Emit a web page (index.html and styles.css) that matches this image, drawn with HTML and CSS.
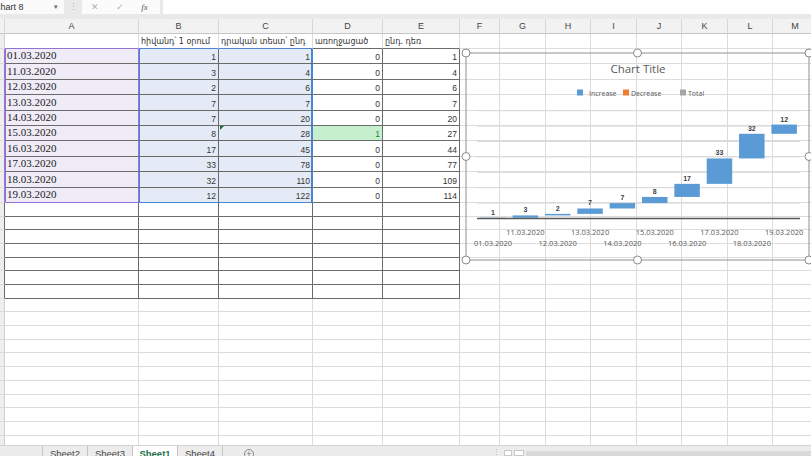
FILE: index.html
```html
<!DOCTYPE html>
<html lang="hy">
<head>
    <meta charset="UTF-8">
    <meta name="viewport" content="width=device-width, initial-scale=1.0">
    <title>COVID-19 - Sheet1</title>
    <link rel="stylesheet" href="styles.css">
</head>
<body>
    <div class="formula-bar">
        <div class="name-box">
            <span class="name-text">Chart 8</span>
            <span class="name-arrow">▾</span>
        </div>
        <div class="bar-grip">⋮</div>
        <div class="bar-icons">
            <span class="icon">✕</span>
            <span class="icon">✓</span>
            <span class="icon icon-fx">fx</span>
        </div>
        <div class="formula-input"></div>
    </div>

    <div class="sheet">
        <table class="grid">
            <colgroup>
                <col style="width:5px">
                <col style="width:134px">
                <col style="width:80px">
                <col style="width:94px">
                <col style="width:70px">
                <col style="width:77px">
                <col style="width:40px">
                <col style="width:46px">
                <col style="width:45px">
                <col style="width:46px">
                <col style="width:45px">
                <col style="width:46px">
                <col style="width:45px">
                <col style="width:45px">
            </colgroup>
            <thead>
                <tr>
                    <th class="corner"></th>
                    <th>A</th><th>B</th><th>C</th><th>D</th><th>E</th><th>F</th><th>G</th>
                    <th>H</th><th>I</th><th>J</th><th>K</th><th>L</th><th>M</th>
                </tr>
            </thead>
            <tbody id="gridBody"></tbody>
        </table>

        <div class="chart">
            <svg width="352" height="215" viewBox="462 49 352 215">
                <rect class="chart-frame" x="466" y="53" width="343" height="207"></rect>
                <text class="chart-title" x="638" y="73">Chart Title</text>

                <rect x="577" y="89.5" width="6" height="6" fill="#5b9bd5"></rect>
                <text class="legend" x="589" y="95.5">Increase</text>
                <rect x="623" y="89.5" width="6" height="6" fill="#ed7d31"></rect>
                <text class="legend" x="631" y="95.5">Decrease</text>
                <rect x="680" y="89.5" width="6" height="6" fill="#a5a5a5"></rect>
                <text class="legend" x="688" y="95.5">Total</text>

                <g id="plot"></g>

                <circle class="handle" cx="466" cy="53" r="4"></circle>
                <circle class="handle" cx="637.5" cy="53" r="4"></circle>
                <circle class="handle" cx="809" cy="53" r="4"></circle>
                <circle class="handle" cx="466" cy="156.5" r="4"></circle>
                <circle class="handle" cx="809" cy="156.5" r="4"></circle>
                <circle class="handle" cx="466" cy="260" r="4"></circle>
                <circle class="handle" cx="637.5" cy="260" r="4"></circle>
                <circle class="handle" cx="809" cy="260" r="4"></circle>
            </svg>
        </div>
    </div>

    <div class="tab-bar">
        <div class="tab-nav"></div>
        <div class="tab">Sheet2</div>
        <div class="tab">Sheet3</div>
        <div class="tab active">Sheet1</div>
        <div class="tab">Sheet4</div>
        <div class="tab-add">+</div>
        <div class="hscroll">
            <span class="hscroll-grip">⋮</span>
            <span class="hscroll-btn"></span>
            <span class="hscroll-btn wide"></span>
            <span class="hscroll-track"></span>
        </div>
    </div>

    <script>
        const data = [
            ['01.03.2020', 1, 1, 0, 1],
            ['11.03.2020', 3, 4, 0, 4],
            ['12.03.2020', 2, 6, 0, 6],
            ['13.03.2020', 7, 7, 0, 7],
            ['14.03.2020', 7, 20, 0, 20],
            ['15.03.2020', 8, 28, 1, 27],
            ['16.03.2020', 17, 45, 0, 44],
            ['17.03.2020', 33, 78, 0, 77],
            ['18.03.2020', 32, 110, 0, 109],
            ['19.03.2020', 12, 122, 0, 114]
        ];
        const labels = ['հիվանդ՝ 1 օրում', 'դրական տեստ՝ ընդ', 'առողջացած', 'ընդ. դեռ'];
        const EMPTY_COLS = 8; // F..M
        const body = document.getElementById('gridBody');

        function addRow(rowClass, headClass, cells) {
            const tr = document.createElement('tr');
            tr.className = rowClass;
            const head = document.createElement('td');
            head.className = 'row-head ' + headClass;
            tr.appendChild(head);
            cells.forEach(cell => {
                const td = document.createElement('td');
                td.className = cell.cls || '';
                if (cell.text !== undefined) td.textContent = cell.text;
                tr.appendChild(td);
            });
            for (let i = 0; i < EMPTY_COLS; i++) {
                tr.appendChild(document.createElement('td'));
            }
            body.appendChild(tr);
        }

        // header labels
        addRow('row-label', '', [
            { cls: 'top-a' },
            { cls: 'label top-b', text: labels[0] },
            { cls: 'label top-b', text: labels[1] },
            { cls: 'label top-box', text: labels[2] },
            { cls: 'label top-box', text: labels[3] }
        ]);

        // data rows
        data.forEach((row, i) => {
            const first = i === 0 ? ' first' : '';
            const last = i === data.length - 1 ? ' last' : '';
            addRow('row-data', 'edge-a', [
                { cls: 'date sel-a' + last, text: row[0] },
                { cls: 'num sel-b sel-b-start' + first + last, text: row[1] },
                { cls: 'num sel-b sel-b-end' + first + last + (row[3] ? ' flag' : ''), text: row[2] },
                { cls: 'num box' + (row[3] ? ' good' : ''), text: row[3] },
                { cls: 'num box', text: row[4] }
            ]);
        });

        // empty bordered rows
        for (let i = 0; i < 7; i++) {
            addRow('row-box', 'edge-box', [
                { cls: 'box' }, { cls: 'box' }, { cls: 'box' }, { cls: 'box' }, { cls: 'box' }
            ]);
        }

        // plain rows
        for (let i = 0; i < 11; i++) {
            addRow('row-empty', '', [{}, {}, {}, {}, {}]);
        }

        // waterfall chart
        const svgNS = 'http://www.w3.org/2000/svg';
        const plot = document.getElementById('plot');
        const AXIS_Y = 218.5;
        const SCALE = 0.77;
        const FIRST_X = 493;
        const STEP = 32.35;
        const BAR_W = 25.5;

        function svgEl(tag, attrs, text) {
            const el = document.createElementNS(svgNS, tag);
            for (const key in attrs) el.setAttribute(key, attrs[key]);
            if (text !== undefined) el.textContent = text;
            plot.appendChild(el);
            return el;
        }

        for (let v = 20; v <= 140; v += 20) {
            const y = AXIS_Y - v * SCALE;
            svgEl('line', { x1: 477, x2: 800, y1: y, y2: y, class: 'gridline' });
        }

        let total = 0;
        data.forEach((row, i) => {
            const value = row[1];
            const cx = FIRST_X + STEP * i;
            const top = AXIS_Y - (total + value) * SCALE;
            svgEl('rect', { x: cx - BAR_W / 2, y: top, width: BAR_W, height: value * SCALE, class: 'bar' });
            svgEl('text', { x: cx, y: top - 3, class: 'bar-label' }, value);
            svgEl('text', { x: cx, y: i % 2 ? 234.5 : 245.5, class: 'axis-label' }, row[0]);
            total += value;
        });

        svgEl('line', { x1: 477, x2: 800, y1: AXIS_Y, y2: AXIS_Y, class: 'axis' });
    </script>
</body>
</html>
```

FILE: styles.css
```css
* {
    box-sizing: border-box;
}

body {
    margin: 0;
    width: 811px;
    height: 456px;
    overflow: hidden;
    display: flex;
    flex-direction: column;
    background: #fff;
    font-family: 'Liberation Sans', Arial, sans-serif;
    color: #333;
}

/* formula bar */
.formula-bar {
    display: flex;
    height: 19px;
    padding-bottom: 5px;
    background: #e9e9e9;
}

.name-box {
    width: 64px;
    display: flex;
    align-items: center;
    background: #fafafa;
    font-size: 9px;
    overflow: hidden;
}

.name-text {
    margin-left: -6px;
    white-space: nowrap;
}

.name-arrow {
    margin-left: auto;
    margin-right: 6px;
    font-size: 7px;
    color: #666;
}

.bar-grip {
    width: 18px;
    text-align: center;
    font-size: 9px;
    line-height: 14px;
    color: #aaa;
}

.bar-icons {
    width: 78px;
    display: flex;
    align-items: center;
    background: #fbfbfb;
}

.icon {
    width: 25px;
    text-align: center;
    font-size: 9px;
    color: #b0b0b0;
}

.icon-fx {
    font-family: 'Liberation Serif', serif;
    font-style: italic;
    color: #555;
}

.formula-input {
    flex: 1;
    margin-left: 3px;
    background: #fff;
}

/* sheet */
.sheet {
    position: relative;
    flex: 1;
    overflow: hidden;
}

.grid {
    table-layout: fixed;
    width: 818px;
    border-collapse: separate;
    border-spacing: 0;
}

.grid th {
    height: 15px;
    padding: 0;
    font-size: 9px;
    font-weight: normal;
    line-height: 14px;
    color: #444;
    background: #f2f2f2;
    border-right: 1px solid #d8d8d8;
    border-bottom: 1px solid #c6c6c6;
}

.grid td {
    padding: 0 2px 1px;
    border-right: 1px solid #dcdcdc;
    border-bottom: 1px solid #dcdcdc;
    font-size: 8.5px;
    line-height: 10px;
    color: #333;
    vertical-align: bottom;
    white-space: nowrap;
    overflow: hidden;
}

.row-label { height: 15px; }
.row-data { height: 15.4px; }
.row-box, .row-empty { height: 13.7px; }

.grid td.row-head {
    padding: 0;
    background: #eeeeee;
    border-right-color: #cfcfcf;
}

.grid td.edge-a { border-right-color: #9274d6; }
.grid td.edge-box { border-right-color: #6b6b6b; }

.grid td.label {
    font-family: 'DejaVu Sans', sans-serif;
    font-size: 8px;
    color: #333;
}

.grid td.top-a { border-bottom-color: #9274d6; }
.grid td.top-b { border-bottom-color: #4a86d4; }
.grid td.top-box { border-bottom-color: #6b6b6b; }

.grid td.date {
    font-family: 'Liberation Serif', 'Times New Roman', serif;
    font-size: 11px;
    line-height: 12px;
    padding-bottom: 2px;
    color: #222;
}

.grid td.num {
    text-align: right;
}

.grid td.box {
    border-right-color: #6b6b6b;
    border-bottom-color: #6b6b6b;
}

.grid td.sel-a {
    background: #efebf7;
    border-right-color: #9274d6;
    border-bottom-color: #6b6b6b;
    box-shadow: inset 1px 0 #9274d6;
}

.grid td.sel-a.last { border-bottom-color: #9274d6; }

.grid td.sel-b {
    position: relative;
    background: #e4ebf6;
    border-right-color: #6b6b6b;
    border-bottom-color: #6b6b6b;
}

.grid td.sel-b-start { box-shadow: inset 1px 0 #4a86d4; }

.grid td.sel-b-end {
    border-right-color: #4a86d4;
    box-shadow: inset -1px 0 #4a86d4;
}

.grid td.sel-b.last { border-bottom-color: #4a86d4; }

/* selection corner handles */
.grid td.sel-b.first::after,
.grid td.sel-b.last::after {
    content: "";
    position: absolute;
    width: 3px;
    height: 3px;
    background: #2f66b3;
}

.grid td.sel-b-start.first::after { left: -2px; top: -2px; }
.grid td.sel-b-end.first::after { right: -2px; top: -2px; }
.grid td.sel-b-start.last::after { left: -2px; bottom: -2px; }
.grid td.sel-b-end.last::after { right: -2px; bottom: -2px; }

.grid td.good {
    background: #c6efce;
    color: #1e7b34;
}

.grid td.flag::before {
    content: "";
    position: absolute;
    left: 1px;
    top: 0;
    border-top: 4px solid #1d6b35;
    border-right: 4px solid transparent;
}

/* chart */
.chart {
    position: absolute;
    left: 462px;
    top: 30px;
    width: 352px;
    height: 215px;
}

.chart svg {
    display: block;
    overflow: visible;
}

.chart-frame {
    fill: none;
    stroke: #8f8f8f;
    stroke-width: 1;
}

.handle {
    fill: #fff;
    stroke: #8a8a8a;
    stroke-width: 1;
}

.chart-title {
    font-family: 'Open Sans', sans-serif;
    font-size: 11.5px;
    fill: #595959;
    text-anchor: middle;
}

.legend {
    font-family: 'Open Sans', sans-serif;
    font-size: 7px;
    fill: #595959;
}

.gridline {
    stroke: #d9d9d9;
    stroke-width: 1;
}

.axis {
    stroke: #595959;
    stroke-width: 1.5;
}

.bar {
    fill: #5b9bd5;
}

.bar-label {
    font-family: 'Liberation Sans', sans-serif;
    font-size: 7px;
    font-weight: bold;
    fill: #404040;
    text-anchor: middle;
}

.axis-label {
    font-family: 'Open Sans', sans-serif;
    font-size: 7.5px;
    fill: #595959;
    text-anchor: middle;
}

/* sheet tabs */
.tab-bar {
    display: flex;
    height: 11px;
    background: #ececec;
    border-top: 1px solid #d2d2d2;
    overflow: hidden;
    font-size: 9.5px;
    line-height: 11px;
    color: #444;
}

.tab-nav {
    width: 43px;
    border-right: 1px solid #c4c4c4;
}

.tab {
    width: 45px;
    padding-top: 2px;
    text-align: center;
    border-right: 1px solid #c4c4c4;
}

.tab.active {
    background: #fff;
    color: #217346;
    font-weight: bold;
}

.tab-add {
    width: 10px;
    height: 10px;
    margin: 3px 0 0 21px;
    border: 1px solid #888;
    border-radius: 50%;
    font-size: 9px;
    line-height: 8px;
    text-align: center;
    color: #777;
}

.hscroll {
    margin-left: auto;
    width: 321px;
    display: flex;
    align-items: flex-end;
    gap: 2px;
}

.hscroll-grip {
    width: 12px;
    font-size: 7px;
    line-height: 9px;
    text-align: center;
    color: #aaa;
}

.hscroll-btn {
    width: 8px;
    height: 6px;
    background: #fff;
    border: 1px solid #c8c8c8;
}

.hscroll-btn.wide {
    width: 10px;
}

.hscroll-track {
    flex: 1;
    height: 5px;
    background: #d9d9d9;
}
```
